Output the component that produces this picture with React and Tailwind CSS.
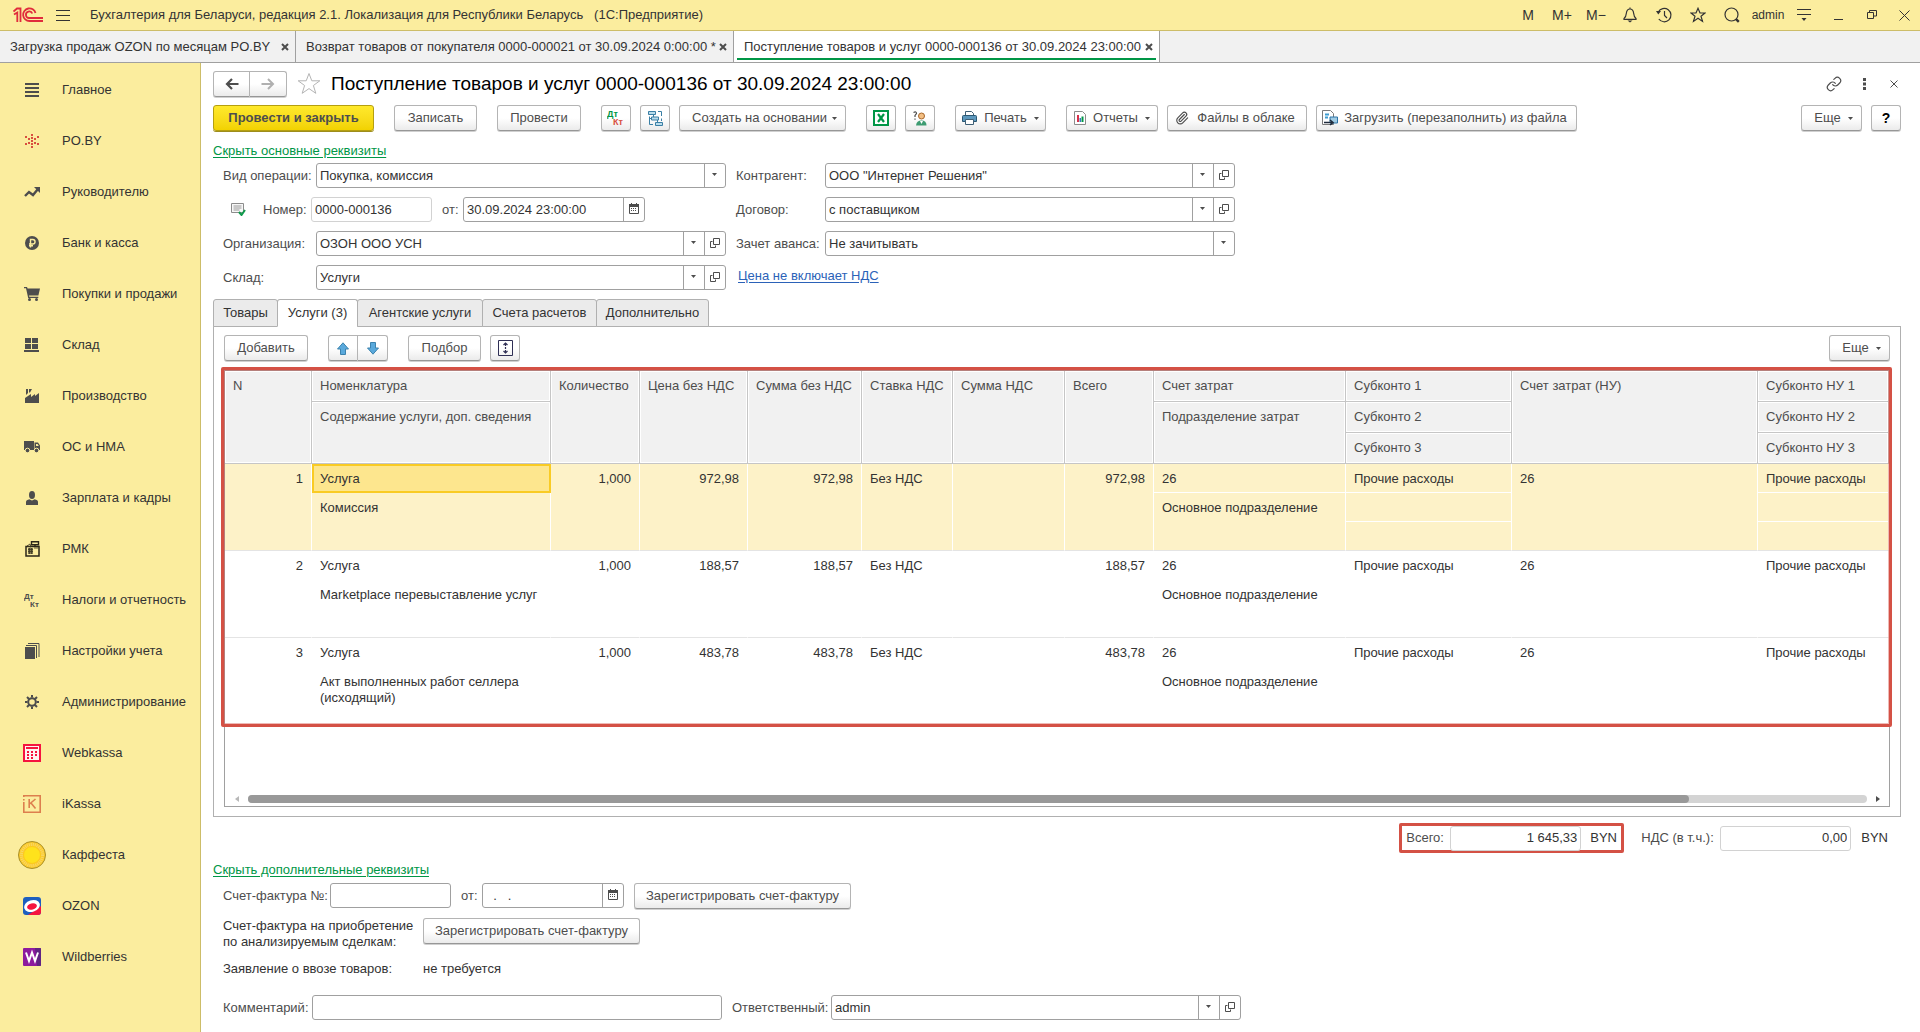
import { useState } from "react";
import { Link, Paperclip } from "lucide-react";

const sections = [
  { title: "Главное", icon: "menu" },
  { title: "PO.BY", icon: "poby" },
  { title: "Руководителю", icon: "trend" },
  { title: "Банк и касса", icon: "bank" },
  { title: "Покупки и продажи", icon: "cart" },
  { title: "Склад", icon: "stock" },
  { title: "Производство", icon: "factory" },
  { title: "ОС и НМА", icon: "truck" },
  { title: "Зарплата и кадры", icon: "person" },
  { title: "РМК", icon: "till" },
  { title: "Налоги и отчетность", icon: "dtkt" },
  { title: "Настройки учета", icon: "books" },
  { title: "Администрирование", icon: "gear" },
  { title: "Webkassa", icon: "webkassa" },
  { title: "iKassa", icon: "ikassa" },
  { title: "Каффеста", icon: "kaffesta" },
  { title: "OZON", icon: "ozon" },
  { title: "Wildberries", icon: "wb" },
];

const rows = [
  { n: 1, item: "Услуга", text: "Комиссия", qty: "1,000", price: "972,98", sum: "972,98" },
  { n: 2, item: "Услуга", text: "Marketplace перевыставление услуг", qty: "1,000", price: "188,57", sum: "188,57" },
  { n: 3, item: "Услуга", text: "Акт выполненных работ селлера (исходящий)", qty: "1,000", price: "483,78", sum: "483,78" },
];

function SectionIcon({ name }) {
  const dark = "#4d4d4d";
  switch (name) {
    case "menu":
      return <svg width="14" height="14" fill={dark}><path d="M0 0h14v2H0zM0 4h14v2H0zM0 8h14v2H0zM0 12h14v2H0z" /></svg>;
    case "poby":
      return (
        <svg width="14" height="14" fill="#d8503f" shapeRendering="crispEdges">
          <path d="M6 0h2v2H6zM6 3h2v2H6zM6 6h2v2H6zM6 9h2v2H6zM6 12h2v2H6zM3 4h2v2H3zM9 4h2v2H9zM3 8h2v2H3zM9 8h2v2H9zM0 2h2v2H0zM12 2h2v2h-2zM0 9h2v2H0zM12 9h2v2h-2z" />
        </svg>
      );
    case "trend":
      return (
        <svg width="16" height="10" viewBox="0 0 16 10">
          <path d="M1 9l4-4 4 3 5-6" fill="none" stroke={dark} strokeWidth="2.4" />
          <path d="M10 0h6v6z" fill={dark} />
        </svg>
      );
    case "bank":
      return (
        <svg width="14" height="14" viewBox="0 0 14 14">
          <circle cx="7" cy="7" r="7" fill={dark} />
          <path d="M5.5 11.5v-8h2.300a2.200 2.200 0 0 1 0 4.500H4M4 9.800h4" fill="none" stroke="#fbed9e" strokeWidth="1.400" />
        </svg>
      );
    case "cart":
      return (
        <svg width="16" height="14" viewBox="0 0 16 14" fill={dark}>
          <path d="M0 0h3l.6 1.500H16l-1.600 7H5l.3 1.200h9V11H4.200L2 1.300H0z" />
          <circle cx="5.500" cy="12.500" r="1.500" />
          <circle cx="12.500" cy="12.500" r="1.500" />
        </svg>
      );
    case "stock":
      return <svg width="16" height="14" fill={dark}><path d="M1 0h6v5H1zM8 0h6v5H8zM1 6h6v5H1zM8 6h6v5H8zM0 12h15v2H0z" /></svg>;
    case "factory":
      return <svg width="14" height="14" fill={dark}><path d="M0 14V9l6-4v3l4-3v2l4-3v10zM1 0h2v4L1 6zM4 0h3L5 3.500H4z" /></svg>;
    case "truck":
      return (
        <svg width="16" height="12" viewBox="0 0 16 12" fill={dark}>
          <path d="M0 0h10v9H0z" />
          <path fillRule="evenodd" d="M10.500 1.500H14l2 3V9h-5.500zM12 3v2h2.800L13.500 3z" />
          <circle cx="3.500" cy="9.500" r="2.300" stroke="#fbed9e" strokeWidth="1" />
          <circle cx="12.500" cy="9.500" r="2.300" stroke="#fbed9e" strokeWidth="1" />
        </svg>
      );
    case "person":
      return <svg width="12" height="14" fill={dark}><ellipse cx="6" cy="4" rx="3" ry="4" /><path d="M0 14v-3q0-2 3.500-2.700Q6 10.500 8.500 8.300 12 9 12 11v3z" /></svg>;
    case "till":
      return (
        <svg width="15" height="16" viewBox="0 0 15 16">
          <path d="M1 5.500h13v9.500H1z" fill="none" stroke="#2b2618" strokeWidth="1.500" />
          <path d="M6.500.7h7v3h-7zM10 3.500V6" fill="none" stroke="#2b2618" strokeWidth="1.400" />
          <path d="M3 7h5v6H3z" fill="#7d7550" />
          <path d="M3 8.500h5M3 10.500h5M4.500 7v6M6.500 7v6M2 5l3-2 1 3zM9 7h4" stroke="#3e381f" strokeWidth=".8" fill="none" />
        </svg>
      );
    case "dtkt":
      return (
        <svg width="16" height="16" viewBox="0 0 16 16" fill={dark} fontFamily="Liberation Sans, sans-serif" fontSize="8" fontWeight="bold">
          <text x="0" y="7">Дт</text>
          <text x="6" y="15">Кт</text>
        </svg>
      );
    case "books":
      return (
        <svg width="15" height="16" viewBox="0 0 15 16">
          <path d="M0 4h10v12H0z" fill={dark} />
          <path d="M1 2.500h10.500V15M3 .5h11V14" fill="none" stroke={dark} />
        </svg>
      );
    case "gear":
      return (
        <svg width="14" height="14" viewBox="0 0 14 14" fill="none" stroke={dark}>
          <circle cx="7" cy="7" r="3.800" strokeWidth="2" />
          <path d="M7 0v2.500M7 11.500V14M0 7h2.500M11.500 7H14M2 2l2 2M10 10l2 2M12 2l-2 2M4 10l-2 2" strokeWidth="2" />
        </svg>
      );
    case "webkassa":
      return (
        <svg width="18" height="18" viewBox="0 0 18 18">
          <path d="M0 0h18v18H0z" fill="#f5143f" />
          <path d="M2 2h14v14H2z" fill="#fff4f0" />
          <path d="M3 3h12v2H3zM4 7h2v2H4zM8 7h2v2H8zM12 7h2v2h-2zM4 10h2v2H4zM8 10h2v2H8zM12 10h2v2h-2zM4 13h2v2H4zM8 13h2v2H8z" fill="#f5143f" />
        </svg>
      );
    case "ikassa":
      return (
        <svg width="18" height="18" viewBox="0 0 18 18" fill="none" stroke="#dd7f4e" strokeWidth="1.600">
          <path d="M.8 2V.8h16.400v16.400H.8V7M.8 4v1.500" />
          <path d="M6.200 4v9M12.500 4l-6 5M8 8l4.500 5.500" />
        </svg>
      );
    case "kaffesta":
      return (
        <svg width="28" height="28" viewBox="0 0 28 28">
          <circle cx="14" cy="14" r="13.500" fill="#fccb2d" stroke="#a8902a" />
          <circle cx="14" cy="14" r="10.500" fill="none" stroke="#f8d766" strokeWidth="3" strokeDasharray="1 1" />
          <circle cx="14" cy="14" r="8.500" fill="#fee21c" stroke="#fcc81e" />
        </svg>
      );
    case "ozon":
      return (
        <svg width="18" height="18" viewBox="0 0 18 18">
          <rect width="18" height="18" rx="3" fill="#1d5fbf" />
          <path d="M5 18L18 9v6a3 3 0 0 1-3 3z" fill="#f5143f" />
          <ellipse cx="9" cy="9" rx="8" ry="5.800" fill="#fff" transform="rotate(-18 9 9)" />
          <ellipse cx="9" cy="9.500" rx="5" ry="3.200" fill="#f5143f" transform="rotate(-15 9 9.500)" />
        </svg>
      );
    default:
      return (
        <svg width="18" height="18" viewBox="0 0 18 18">
          <rect width="18" height="18" rx="1" fill="#8d1a9e" />
          <path d="M12 0h5a1 1 0 0 1 1 1v16a1 1 0 0 1-1 1h-3z" fill="#5f2483" />
          <path d="M3 4.500l3 8.500 3-8.500 3 8.500 3-8.500" fill="none" stroke="#fff" strokeWidth="2" />
        </svg>
      );
  }
}

function Caret() {
  return <svg width="5" height="3" className="shrink-0" fill="#4d4d4d"><path d="M0 0h5L2.500 3z" /></svg>;
}

function OpenIcon() {
  return (
    <svg width="10" height="10" viewBox="0 0 10 10" fill="none" stroke="#4d4d4d">
      <path d="M3.500.5h6v6h-6zM2.500 3.500h-2v6h5v-2" />
    </svg>
  );
}

function CalendarIcon() {
  return (
    <svg width="10" height="11" viewBox="0 0 10 11">
      <path d="M.5 2h9v8.500h-9z" fill="#fff" stroke="#4d4d4d" />
      <path d="M0 1h10v3H0zM2 0h1v2H2zM7 0h1v2H7zM2 5h1v1H2zM4 5h1v1H4zM6 5h1v1H6zM2 7h1v1H2zM4 7h1v1H4zM6 7h1v1H6z" fill="#4d4d4d" />
    </svg>
  );
}

function Button({ className = "", children, ...rest }) {
  return (
    <button
      type="button"
      className={`flex h-[26px] shrink-0 cursor-pointer items-center justify-center rounded-[3px] border border-[#b4b4b4] border-b-[#979797] bg-linear-to-b from-white from-50% to-[#ebebeb] whitespace-nowrap text-[#4d4d4d] shadow-[0_1px_0_#d0d0d0] ${className}`}
      {...rest}
    >
      {children}
    </button>
  );
}

function FieldButton({ label, children }) {
  return (
    <button type="button" aria-label={label} className="flex w-[21px] shrink-0 cursor-pointer items-center justify-center border-l border-[#a0a0a0] pr-px pb-0.5">
      {children}
    </button>
  );
}

function Field({ id, value = "", className = "", tone = "border-[#a0a0a0]", align = "", children }) {
  return (
    <div className={`flex h-[25px] shrink-0 rounded-[3px] border bg-white ${tone} ${className}`}>
      <input id={id} defaultValue={value} className={`w-0 min-w-0 flex-1 px-[3px] text-[#333] outline-none ${align}`} />
      {children}
    </div>
  );
}

function Lookup({ id, value, className }) {
  return (
    <Field id={id} value={value} className={className}>
      <FieldButton label="Выбрать"><Caret /></FieldButton>
      <FieldButton label="Открыть"><OpenIcon /></FieldButton>
    </Field>
  );
}

function Dropdown({ id, value, className = "" }) {
  return (
    <div className={`relative flex h-[25px] shrink-0 rounded-[3px] border border-[#a0a0a0] bg-white ${className}`}>
      <select id={id} className="flex-1 appearance-none px-[3px] text-[#333] outline-none">
        <option>{value}</option>
      </select>
      <span className="pointer-events-none absolute inset-y-0 right-0 flex w-[21px] items-center justify-center border-l border-[#a0a0a0] pr-px pb-0.5">
        <Caret />
      </span>
    </div>
  );
}

function Label({ htmlFor, className = "", children }) {
  return <label htmlFor={htmlFor} className={`shrink-0 whitespace-nowrap text-[#4d4d4d] ${className}`}>{children}</label>;
}

function TitleBar() {
  return (
    <header className="flex h-[31px] items-center border-b border-[#cdbd68] bg-[#fbed9e] text-[#333]">
      <svg width="30" height="16" viewBox="0 0 30 16" className="ml-[13px]" fill="none" stroke="#e02c3c" strokeWidth="1.800">
        <path d="M.5 4.500L4 1.500h3.500V15M4.300 15V5.500L1 7.500" />
        <path d="M22.500 6A6.300 6.300 0 1 0 16.500 14H30" />
        <path d="M19.300 6.500A3.300 3.300 0 1 0 16.500 11H30" />
      </svg>
      <button type="button" aria-label="Меню" className="ml-[13px] cursor-pointer">
        <svg width="14" height="13" fill="#333"><path d="M0 1h14v1H0zM0 6h14v1H0zM0 11h14v1H0z" /></svg>
      </button>
      <h1 className="ml-5 whitespace-pre">Бухгалтерия для Беларуси, редакция 2.1. Локализация для Республики Беларусь   (1С:Предприятие)</h1>
      <div className="ml-auto flex shrink-0 items-center">
        <button type="button" className="w-[34px] cursor-pointer text-sm">M</button>
        <button type="button" className="w-[34px] cursor-pointer text-sm">M+</button>
        <button type="button" className="w-[34px] cursor-pointer text-sm">M−</button>
        <button type="button" aria-label="Уведомления" className="flex w-[34px] cursor-pointer justify-center">
          <svg width="14" height="16" viewBox="0 0 14 16" fill="none" stroke="#333" strokeWidth="1.200">
            <path d="M7 .5V2M1 11.500q2-1.500 2.300-5Q3.800 2 7 2t3.700 4.500q.3 3.500 2.300 5v.9H1z" />
            <path d="M4.500 13.500h5L7 15.500z" fill="#333" stroke="none" />
          </svg>
        </button>
        <button type="button" aria-label="История" className="flex w-[34px] cursor-pointer justify-center">
          <svg width="16" height="16" viewBox="0 0 16 16" fill="none" stroke="#333" strokeWidth="1.200">
            <path d="M2.300 5A6.700 6.700 0 1 1 2.800 12M8.500 4v4.500l2.500 2.500" />
            <path d="M0 4h5L2.300 7.500z" fill="#333" stroke="none" />
          </svg>
        </button>
        <button type="button" aria-label="Избранное" className="flex w-[34px] cursor-pointer justify-center">
          <svg width="16" height="16" viewBox="0 0 16 16" fill="none" stroke="#333" strokeWidth="1.200"><path d="M8 1.300l2 4.700h5l-4 3.200 1.500 5.200L8 11.300l-4.500 3.100L5 9.200 1 6h5z" /></svg>
        </button>
        <button type="button" aria-label="Поиск" className="flex w-[34px] cursor-pointer justify-center">
          <svg width="16" height="16" viewBox="0 0 16 16" fill="none" stroke="#333"><circle cx="7.500" cy="7.500" r="6.500" strokeWidth="1.200" /><path d="M11.800 11.800l3 3" strokeWidth="2.400" /></svg>
        </button>
        <button type="button" className="w-[38px] cursor-pointer text-xs">admin</button>
        <button type="button" aria-label="Настройки" className="flex w-[34px] cursor-pointer justify-center">
          <svg width="14" height="14" fill="#333"><path d="M0 1h14v1H0zM0 6h14v1H0zM4.500 10h5L7 13z" /></svg>
        </button>
        <button type="button" aria-label="Свернуть" className="flex w-[34px] cursor-pointer justify-center">
          <svg width="9" height="12" fill="#333"><path d="M0 10h9v1H0z" /></svg>
        </button>
        <button type="button" aria-label="Окно" className="flex w-[34px] cursor-pointer justify-center">
          <svg width="10" height="10" fill="none" stroke="#333"><path d="M.5 2.500h6v6h-6zM2.500 2V.5h7v5.500H7" /></svg>
        </button>
        <button type="button" aria-label="Закрыть" className="flex w-[31px] cursor-pointer justify-center">
          <svg width="11" height="11" fill="none" stroke="#333"><path d="M.5.5l10 10M10.500.5l-10 10" /></svg>
        </button>
      </div>
    </header>
  );
}

function WindowTab({ className, active, children }) {
  return (
    <div className={`relative flex shrink-0 items-center justify-between border-r border-[#a0a0a0] pr-[6px] pl-[10px] ${active ? "bg-white" : ""} ${className}`}>
      <button type="button" className="cursor-pointer whitespace-nowrap text-[#333]">{children}</button>
      <button type="button" aria-label="Закрыть вкладку" className="flex w-2 cursor-pointer justify-center">
        <svg width="8" height="8" viewBox="0 0 8 8" stroke="#4d4d4d" strokeWidth="2"><path d="M1 1l6 6M7 1L1 7" /></svg>
      </button>
      {active && <span className="absolute inset-x-[3px] bottom-[2px] h-[2px] bg-[#009646]" />}
    </div>
  );
}

function Sidebar() {
  return (
    <nav className="w-[201px] shrink-0 border-r border-[#cdbd68] bg-[#fbed9e] pt-px">
      {sections.map((s) => (
        <a key={s.title} href="#" className="flex h-[51px] items-center whitespace-nowrap text-[#333]">
          <span className="flex w-[62px] shrink-0 justify-center pl-0.5"><SectionIcon name={s.icon} /></span>
          {s.title}
        </a>
      ))}
    </nav>
  );
}

function DocumentHeader() {
  return (
    <div className="flex h-[25px] items-center">
      <div className="flex">
        <Button aria-label="Назад" className="h-[25px] w-[37px] rounded-r-none">
          <svg width="14" height="12" viewBox="0 0 14 12" fill="none" stroke="#4d4d4d" strokeWidth="2.200"><path d="M13.500 6H2M7 1L2 6l5 5" /></svg>
        </Button>
        <Button aria-label="Вперед" className="h-[25px] w-[37px] rounded-l-none border-l-0">
          <svg width="14" height="12" viewBox="0 0 14 12" fill="none" stroke="#b0b0b0" strokeWidth="2"><path d="M.5 6H12M7 1l5 5-5 5" /></svg>
        </Button>
      </div>
      <button type="button" aria-label="В избранное" className="ml-[10px] cursor-pointer">
        <svg width="24" height="23" viewBox="0 0 24 23" fill="none" stroke="#b4b4b4"><path d="M12 1.500l2.800 7.300h8l-6.400 4.700 2.400 7.800L12 16.600l-6.800 4.700 2.400-7.800L1.200 8.800h8z" /></svg>
      </button>
      <h2 className="ml-[10px] text-[19px] leading-6 whitespace-nowrap text-black">Поступление товаров и услуг 0000-000136 от 30.09.2024 23:00:00</h2>
      <div className="-mr-2 ml-auto flex items-center">
        <button type="button" aria-label="Ссылка" className="flex w-[30px] cursor-pointer justify-center text-[#4d4d4d]"><Link size={16} strokeWidth={1.75} /></button>
        <button type="button" aria-label="Действия" className="flex w-[30px] cursor-pointer justify-center">
          <svg width="3" height="12" fill="#4d4d4d"><path d="M0 0h3v3H0zM0 4.500h3v3H0zM0 9h3v3H0z" /></svg>
        </button>
        <button type="button" aria-label="Закрыть" className="flex w-[30px] cursor-pointer justify-center">
          <svg width="8" height="8" stroke="#4d4d4d"><path d="M.5.5l7 7M7.500.5l-7 7" /></svg>
        </button>
      </div>
    </div>
  );
}

function Toolbar() {
  return (
    <div className="mt-[9px] flex">
      <button type="button" className="flex h-[26px] w-[161px] shrink-0 cursor-pointer items-center justify-center rounded-[3px] border border-[#b59f10] bg-linear-to-b from-[#ffe92b] to-[#f2d200] font-bold whitespace-nowrap text-[#4d4d4d] shadow-[0_1px_0_#9d8d1c]">
        Провести и закрыть
      </button>
      <Button className="ml-5 w-[83px]">Записать</Button>
      <Button className="ml-5 w-[84px]">Провести</Button>
      <Button className="ml-5 w-[30px]" aria-label="Движения документа">
        <svg width="18" height="18" viewBox="0 0 18 18" fontFamily="Liberation Sans, sans-serif" fontSize="9" fontWeight="bold">
          <text x="0" y="8" fill="#009646">Дт</text>
          <text x="6" y="16" fill="#d8503f">Кт</text>
        </svg>
      </Button>
      <Button className="ml-[9px] w-[30px]" aria-label="Структура подчиненности">
        <svg width="15" height="15" viewBox="0 0 15 15" fill="#b9dcec" stroke="#3a7fa5">
          <path d="M.5.5h7v3h-7zM3.500 6h7v3h-7zM7.500 11.500h7v3h-7z" />
          <path d="M10 .5h3.500V5M13.500 7.500V10M1.500 5.500v8H5M1.500 7.500h2M5.500 4v2M9.500 9v2.500" fill="none" />
        </svg>
      </Button>
      <Button className="ml-[9px] w-[167px] gap-[5px] pl-1">Создать на основании <Caret /></Button>
      <Button className="ml-5 w-[30px]" aria-label="Excel">
        <svg width="16" height="16" viewBox="0 0 16 16"><path d="M1 1h14v14H1z" fill="#fff" stroke="#009646" strokeWidth="2" /><path d="M5 4l6 8M11 4l-6 8" stroke="#009646" strokeWidth="2.200" /></svg>
      </Button>
      <Button className="ml-[9px] w-[30px]" aria-label="Помощник">
        <svg width="14" height="15" viewBox="0 0 14 15">
          <path d="M.5 1.500Q3.500 0 3.500 2.500L2 4.500V6M2 7.500v1.300" fill="none" stroke="#4d4d4d" strokeWidth="1.200" />
          <circle cx="8.500" cy="5" r="3" fill="#f3bf83" stroke="#a8672b" />
          <path d="M3 14.500q.5-5 5.500-5t5 5z" fill="#3e9c72" />
          <path d="M7 10l1.500 3L10 10z" fill="#fff" />
        </svg>
      </Button>
      <Button className="ml-5 w-[91px] gap-[7px]">
        <svg width="15" height="14" viewBox="0 0 15 14">
          <path d="M3.500 5V.5h6l2 2V5" fill="#fff" stroke="#3f6076" />
          <path d="M.5 5.500q0-1 1-1h12q1 0 1 1v5H.5z" fill="#5d98bd" stroke="#2c5873" />
          <path d="M3.500 8.500h8v5h-8z" fill="#fff" stroke="#3f6076" />
        </svg>
        Печать <Caret />
      </Button>
      <Button className="ml-5 w-[92px] gap-[7px]">
        <svg width="12" height="14" viewBox="0 0 12 14">
          <path d="M.5.5h8l3 3v10H.5z" fill="#fff" stroke="#8c8c8c" />
          <path d="M3 4h2v7H3z" fill="#d8304a" /><path d="M5.500 7h1.500v4H5.500z" fill="#3878c0" /><path d="M7.500 5.500h2V11h-2z" fill="#009646" />
        </svg>
        Отчеты <Caret />
      </Button>
      <Button className="ml-[9px] w-[140px] gap-2 pr-1"><Paperclip size={14} strokeWidth={2} /> Файлы в облаке</Button>
      <Button className="ml-[9px] w-[261px] gap-[6px] pr-1">
        <svg width="16" height="16" viewBox="0 0 16 16">
          <path d="M.5.5h8l3 3v11H.5z" fill="#fff" stroke="#7a7a7a" />
          <path d="M8 7h7.500v6H8z" fill="#9fcbe4" stroke="#2e74a6" />
          <path d="M3 4.500h4M3 7.500h3" stroke="#3e9cd0" strokeWidth="2" />
          <path d="M2 12.500h8M8 10l3 2.500L8 15" fill="none" stroke="#1f2b3c" strokeWidth="1.500" />
        </svg>
        Загрузить (перезаполнить) из файла
      </Button>
      <Button className="ml-auto w-[61px] gap-[7px] pl-1">Еще <Caret /></Button>
      <Button className="ml-[9px] w-[30px] text-sm font-bold" aria-label="Справка"><span className="text-black">?</span></Button>
    </div>
  );
}

function MainFields() {
  return (
    <div className="mt-1 flex gap-[10px] pl-[10px]">
      <div className="flex flex-col gap-[9px]">
        <div className="flex items-center">
          <Label htmlFor="operation" className="w-[93px]">Вид операции:</Label>
          <Dropdown id="operation" value="Покупка, комиссия" className="w-[410px]" />
        </div>
        <div className="flex items-center">
          <svg width="15" height="13" viewBox="0 0 15 13" className="ml-2" fill="none">
            <path d="M.5.5h12v9H.5z" stroke="#8c8c8c" fill="#f7f7f7" />
            <path d="M2.500 3h8M2.500 5h8M2.500 7h6" stroke="#9a9a9a" />
            <path d="M8 9l2.500 3L14 7" stroke="#109a4c" strokeWidth="2" />
          </svg>
          <Label htmlFor="number" className="ml-[17px] w-12">Номер:</Label>
          <Field id="number" value="0000-000136" tone="border-[#d2d2d2]" className="w-[121px]" />
          <Label htmlFor="date" className="ml-[10px] w-[21px]">от:</Label>
          <Field id="date" value="30.09.2024 23:00:00" className="w-[182px]">
            <FieldButton label="Календарь"><CalendarIcon /></FieldButton>
          </Field>
        </div>
        <div className="flex items-center">
          <Label htmlFor="company" className="w-[93px]">Организация:</Label>
          <Lookup id="company" value="ОЗОН ООО УСН" className="w-[410px]" />
        </div>
        <div className="flex items-center">
          <Label htmlFor="store" className="w-[93px]">Склад:</Label>
          <Lookup id="store" value="Услуги" className="w-[410px]" />
        </div>
      </div>
      <div className="flex flex-col gap-[9px]">
        <div className="flex items-center">
          <Label htmlFor="partner" className="w-[89px]">Контрагент:</Label>
          <Lookup id="partner" value={'ООО "Интернет Решения"'} className="w-[410px]" />
        </div>
        <div className="flex items-center">
          <Label htmlFor="contract" className="w-[89px]">Договор:</Label>
          <Lookup id="contract" value="с поставщиком" className="w-[410px]" />
        </div>
        <div className="flex items-center">
          <Label htmlFor="advance" className="w-[89px]">Зачет аванса:</Label>
          <Dropdown id="advance" value="Не зачитывать" className="w-[410px]" />
        </div>
        <a href="#" className="self-start pt-[3px] pl-0.5 text-[#2b62b8] underline underline-offset-2">Цена не включает НДС</a>
      </div>
    </div>
  );
}

const th = "border-r border-b border-[#c6c6c6] bg-[#f1f1f1] pt-[7px] pl-2 text-left align-top font-normal whitespace-nowrap text-[#4d4d4d] shadow-[inset_1px_1px_0_#fff,inset_-1px_-1px_0_#fff]";

function ServicesTable() {
  const [selected, setSelected] = useState(1);

  return (
    <table className="w-full table-fixed border-separate border-spacing-0">
      <colgroup>
        <col className="w-[87px]" />
        <col className="w-[239px]" />
        <col className="w-[89px]" />
        <col className="w-[108px]" />
        <col className="w-[114px]" />
        <col className="w-[91px]" />
        <col className="w-[112px]" />
        <col className="w-[89px]" />
        <col className="w-[192px]" />
        <col className="w-[166px]" />
        <col className="w-[246px]" />
        <col />
      </colgroup>
      <thead>
        <tr className="h-[31px]">
          <th rowSpan={3} className={th}>N</th>
          <th className={th}>Номенклатура</th>
          <th rowSpan={3} className={th}>Количество</th>
          <th rowSpan={3} className={th}>Цена без НДС</th>
          <th rowSpan={3} className={th}>Сумма без НДС</th>
          <th rowSpan={3} className={th}>Ставка НДС</th>
          <th rowSpan={3} className={th}>Сумма НДС</th>
          <th rowSpan={3} className={th}>Всего</th>
          <th className={th}>Счет затрат</th>
          <th className={th}>Субконто 1</th>
          <th rowSpan={3} className={th}>Счет затрат (НУ)</th>
          <th className={th}>Субконто НУ 1</th>
        </tr>
        <tr className="h-[31px]">
          <th rowSpan={2} className={th}>Содержание услуги, доп. сведения</th>
          <th rowSpan={2} className={th}>Подразделение затрат</th>
          <th className={th}>Субконто 2</th>
          <th className={th}>Субконто НУ 2</th>
        </tr>
        <tr className="h-[31px]">
          <th className={th}>Субконто 3</th>
          <th className={th}>Субконто НУ 3</th>
        </tr>
      </thead>
      {rows.map((r) => {
        const on = r.n === selected;
        const cell = `border-r border-white px-2 pt-[7px] align-top text-[#333] ${on ? "bg-[#fdf2c8]" : "bg-white"}`;
        const line = `${cell} border-b`;
        const last = `${cell} border-b border-b-[#e4e4e4]`;
        return (
          <tbody key={r.n} onClick={() => setSelected(r.n)}>
            <tr className="h-[29px]">
              <td rowSpan={3} className={`${last} text-right`}>{r.n}</td>
              {on ? (
                <td className="border-2 border-[#f9cb24] bg-[#fde68e] px-[6px] pt-[5px] align-top text-[#333]">{r.item}</td>
              ) : (
                <td className={line}>{r.item}</td>
              )}
              <td rowSpan={3} className={`${last} text-right`}>{r.qty}</td>
              <td rowSpan={3} className={`${last} text-right`}>{r.price}</td>
              <td rowSpan={3} className={`${last} text-right`}>{r.sum}</td>
              <td rowSpan={3} className={last}>Без НДС</td>
              <td rowSpan={3} className={last}></td>
              <td rowSpan={3} className={`${last} text-right`}>{r.sum}</td>
              <td className={line}>26</td>
              <td className={line}>Прочие расходы</td>
              <td rowSpan={3} className={last}>26</td>
              <td className={line}>Прочие расходы</td>
            </tr>
            <tr className="h-[29px]">
              <td rowSpan={2} className={last}>{r.text}</td>
              <td rowSpan={2} className={last}>Основное подразделение</td>
              <td className={line}></td>
              <td className={line}></td>
            </tr>
            <tr className="h-[29px]">
              <td className={last}></td>
              <td className={last}></td>
            </tr>
          </tbody>
        );
      })}
    </table>
  );
}

function DocumentTabs() {
  const [tab, setTab] = useState("Услуги (3)");
  const tabs = [
    { title: "Товары", width: "w-[65px]" },
    { title: "Услуги (3)", width: "w-[81px]" },
    { title: "Агентские услуги", width: "w-[126px]" },
    { title: "Счета расчетов", width: "w-[115px]" },
    { title: "Дополнительно", width: "w-[113px]" },
  ];

  return (
    <section className="mt-[9px] flex flex-1 flex-col">
      <div role="tablist" className="z-10 flex">
        {tabs.map((t) => (
          <button
            key={t.title}
            type="button"
            role="tab"
            aria-selected={t.title === tab}
            onClick={() => setTab(t.title)}
            className={`-mr-px h-7 cursor-pointer rounded-t-[3px] border border-[#b0b0b0] whitespace-nowrap text-[#333] ${t.width} ${t.title === tab ? "border-b-white bg-white" : "bg-[#ebebeb]"}`}
          >
            {t.title}
          </button>
        ))}
      </div>
      <div className="-mt-px flex flex-1 flex-col border border-[#b0b0b0] px-[10px] pt-2 pb-[9px]">
        <div className="flex">
          <Button className="w-[84px]">Добавить</Button>
          <Button className="ml-5 w-[30px] rounded-r-none" aria-label="Вверх">
            <svg width="12" height="13" fill="#5aa9dc" stroke="#3c83ae"><path d="M6 .8L11.500 7H8.500v5.500h-5V7H.5z" /></svg>
          </Button>
          <Button className="w-[30px] rounded-l-none border-l-0" aria-label="Вниз">
            <svg width="12" height="13" fill="#5aa9dc" stroke="#3c83ae"><path d="M6 12.200L11.500 6H8.500V.5h-5V6H.5z" /></svg>
          </Button>
          <Button className="ml-5 w-[73px]">Подбор</Button>
          <Button className="ml-[9px] w-[30px]" aria-label="Высота строк">
            <svg width="15" height="16" viewBox="0 0 15 16" fill="none" stroke="#2f2f55">
              <path d="M.5.500h14v15H.5z" />
              <path d="M7.500 3v3M7.500 7v2M7.500 10v3M5.500 5l2-2 2 2M5.500 11l2 2 2-2" strokeWidth="1.200" />
            </svg>
          </Button>
          <Button className="ml-auto w-[61px] gap-[7px] pl-1">Еще <Caret /></Button>
        </div>
        <div className="mt-[9px] flex flex-1 flex-col border border-[#a0a0a0]">
          <div className="relative">
            <ServicesTable />
            <div className="pointer-events-none absolute -top-1 -right-[3px] -bottom-[2px] -left-1 rounded-[2px] border-3 border-[#d45145] ring-1 ring-[#d45145]/40 ring-inset" />
          </div>
          <div className="mt-auto mb-[3px] flex h-2 items-center pr-[9px] pl-[10px]">
            <svg width="4" height="6" fill="#b8b8b8"><path d="M4 0v6L0 3z" /></svg>
            <div className="mx-[9px] h-2 flex-1 rounded-full bg-[#d4d4d4]">
              <div className="h-2 w-[89%] rounded-full bg-[#999]" />
            </div>
            <svg width="4" height="6" fill="#4d4d4d"><path d="M0 0v6l4-3z" /></svg>
          </div>
        </div>
      </div>
    </section>
  );
}

function Totals() {
  return (
    <div className="mt-[6px] flex h-[30px] items-center justify-end pr-[13px] text-[#333]">
      <div className="flex h-[30px] w-[225px] items-center rounded-[2px] border-3 border-[#d45145] pl-1">
        <Label htmlFor="total" className="w-[44px]">Всего:</Label>
        <Field id="total" value="1 645,33" tone="border-[#d2d2d2]" align="text-right" className="w-[131px]" />
        <span className="ml-[9px]">BYN</span>
      </div>
      <Label htmlFor="vat" className="ml-[17px] w-[79px]">НДС (в т.ч.):</Label>
      <Field id="vat" value="0,00" tone="border-[#d2d2d2]" align="text-right" className="w-[131px]" />
      <span className="ml-[10px]">BYN</span>
    </div>
  );
}

function ExtraFields() {
  return (
    <div className="pl-[10px] text-[#333]">
      <div className="mt-[4px] flex h-[27px] items-center">
        <Label htmlFor="invoice" className="w-[107px]">Счет-фактура №:</Label>
        <Field id="invoice" className="w-[121px]" />
        <Label htmlFor="invoice-date" className="ml-[10px] w-[21px]">от:</Label>
        <Field id="invoice-date" value="  .   ." className="w-[142px]">
          <FieldButton label="Календарь"><CalendarIcon /></FieldButton>
        </Field>
        <Button className="ml-[10px] w-[217px]">Зарегистрировать счет-фактуру</Button>
      </div>
      <div className="mt-[9px] flex">
        <p className="w-[200px]">Счет-фактура на приобретение<br />по анализируемым сделкам:</p>
        <Button className="w-[217px]">Зарегистрировать счет-фактуру</Button>
      </div>
      <div className="mt-[11px] flex">
        <span className="w-[200px]">Заявление о ввозе товаров:</span>
        <span>не требуется</span>
      </div>
      <div className="mt-[18px] flex items-center">
        <Label htmlFor="comment" className="w-[89px]">Комментарий:</Label>
        <Field id="comment" className="w-[410px]" />
        <Label htmlFor="manager" className="ml-[10px] w-[99px]">Ответственный:</Label>
        <Lookup id="manager" value="admin" className="w-[410px]" />
      </div>
    </div>
  );
}

export default function App() {
  return (
    <div className="flex min-h-screen flex-col bg-white font-['Liberation_Sans',Arial,sans-serif] text-[13px] leading-4">
      <TitleBar />
      <div className="flex h-8 border-b border-[#a0a0a0] bg-[#f1f1f1]">
        <WindowTab className="w-[296px]">Загрузка продаж OZON по месяцам PO.BY</WindowTab>
        <WindowTab className="w-[438px]">Возврат товаров от покупателя 0000-000021 от 30.09.2024 0:00:00 *</WindowTab>
        <WindowTab className="w-[426px]" active>Поступление товаров и услуг 0000-000136 от 30.09.2024 23:00:00</WindowTab>
      </div>
      <div className="flex flex-1">
        <Sidebar />
        <main className="flex min-w-0 flex-1 flex-col pt-2 pr-[19px] pb-3 pl-3">
          <DocumentHeader />
          <Toolbar />
          <a href="#" className="mt-3 self-start text-[#009646] underline underline-offset-2">Скрыть основные реквизиты</a>
          <MainFields />
          <DocumentTabs />
          <Totals />
          <a href="#" className="mt-[9px] self-start text-[#009646] underline underline-offset-2">Скрыть дополнительные реквизиты</a>
          <ExtraFields />
        </main>
      </div>
    </div>
  );
}
